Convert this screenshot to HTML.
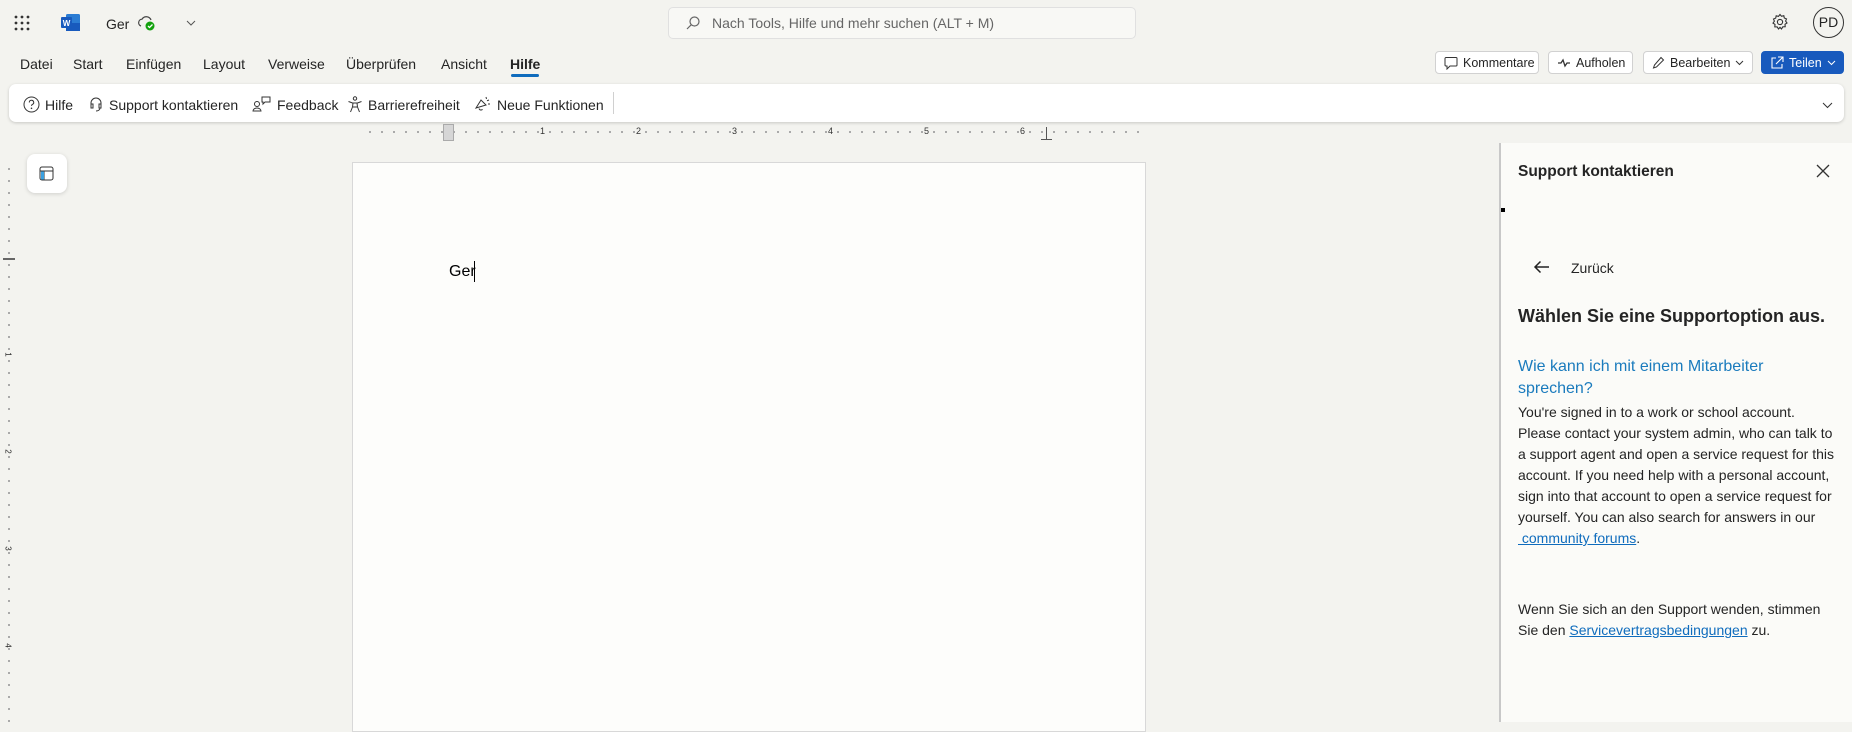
<!DOCTYPE html>
<html><head><meta charset="utf-8"><style>
*{box-sizing:border-box;margin:0;padding:0}
body{width:1852px;height:722px;overflow:hidden;background:#f3f3ef;font-family:"Liberation Sans",sans-serif;color:#242424;position:relative}
.a{position:absolute;white-space:nowrap}
.t{font-size:14px;top:56px}
.btn{position:absolute;top:51px;height:23px;border:1px solid #d1d1d1;border-radius:4px;background:#fff;font-size:12.5px;display:flex;align-items:center;padding-left:8px;gap:5px}
.ri{font-size:14px;top:96px;display:flex;align-items:center;gap:5px}
svg{display:block}
.p{font-size:14px;line-height:21px}
a{color:#0f6cbd;text-decoration:underline}
.rn{font-size:9px;color:#333;top:126px}
</style></head><body>
<svg class="a" style="left:14px;top:15px" width="16" height="16" viewBox="0 0 16 16" fill="#333"><circle cx="2" cy="2" r="1.4"/><circle cx="8" cy="2" r="1.4"/><circle cx="14" cy="2" r="1.4"/><circle cx="2" cy="8" r="1.4"/><circle cx="8" cy="8" r="1.4"/><circle cx="14" cy="8" r="1.4"/><circle cx="2" cy="14" r="1.4"/><circle cx="8" cy="14" r="1.4"/><circle cx="14" cy="14" r="1.4"/></svg>
<svg class="a" style="left:61px;top:13px" width="20" height="19" viewBox="0 0 20 19"><rect x="5" y="1" width="14" height="17" rx="1.5" fill="#2b7cd3"/><rect x="5" y="10" width="14" height="8" fill="#185abd"/><rect x="0" y="4" width="11" height="11" rx="1" fill="#185abd"/><text x="5.5" y="13" font-size="8" font-weight="bold" fill="#fff" text-anchor="middle" font-family="Liberation Sans">W</text></svg>
<div class="a" style="left:106px;top:16px;font-size:14px">Ger</div>
<svg class="a" style="left:137px;top:14px" width="20" height="18" viewBox="0 0 20 18"><path d="M4 12a3.5 3.5 0 0 1 1-6.8A5 5 0 0 1 14 6" fill="none" stroke="#444" stroke-width="1.2"/><circle cx="13" cy="12" r="4.5" fill="#13a10e"/><path d="M11 12l1.5 1.5 3-3" stroke="#fff" stroke-width="1.3" fill="none"/></svg>
<svg class="a" style="left:186px;top:20px" width="10" height="6" viewBox="0 0 10 6"><path d="M1 1l4 4 4-4" stroke="#555" fill="none"/></svg>
<div class="a" style="left:668px;top:7px;width:468px;height:32px;border:1px solid #e0e0e0;border-radius:5px;background:#f8f8f5"></div>
<svg class="a" style="left:686px;top:16px" width="14" height="14" viewBox="0 0 14 14"><circle cx="8.5" cy="5.5" r="4.5" fill="none" stroke="#666" stroke-width="1.2"/><path d="M5.3 8.7L1 13" stroke="#666" stroke-width="1.2"/></svg>
<div class="a" style="left:712px;top:15px;font-size:14px;color:#666">Nach Tools, Hilfe und mehr suchen (ALT + M)</div>
<svg class="a" style="left:1771px;top:13px" width="18" height="18" viewBox="0 0 18 18"><circle cx="9" cy="9" r="2.6" fill="none" stroke="#333" stroke-width="1.1"/><path d="M9 1.5l1.5 1.8 2.3-.6.5 2.3 2.2.9-.9 2.2 1.4 1.9-2 1.3.2 2.4-2.4.1L10.5 16 9 14.3 7.5 16l-1.3-2.1-2.4-.1.2-2.4-2-1.3 1.4-1.9-.9-2.2 2.2-.9.5-2.3 2.3.6z" fill="none" stroke="#333" stroke-width="1.1"/></svg>
<div class="a" style="left:1813px;top:7px;width:31px;height:31px;border:1.3px solid #333;border-radius:50%;font-size:14px;text-align:center;line-height:29px">PD</div>
<div class="a t" style="left:20px">Datei</div>
<div class="a t" style="left:73px">Start</div>
<div class="a t" style="left:126px">Einfügen</div>
<div class="a t" style="left:203px">Layout</div>
<div class="a t" style="left:268px">Verweise</div>
<div class="a t" style="left:346px">Überprüfen</div>
<div class="a t" style="left:441px">Ansicht</div>
<div class="a t" style="left:510px;font-weight:bold">Hilfe</div>
<div class="a" style="left:511px;top:74px;width:28px;height:3px;background:#0f6cbd;border-radius:2px"></div>
<div class="btn" style="left:1435px;width:104px"><svg width="14" height="14" viewBox="0 0 14 14"><path d="M2 1.5h10a1 1 0 0 1 1 1v6.5a1 1 0 0 1-1 1H6l-3 3v-3H2a1 1 0 0 1-1-1V2.5a1 1 0 0 1 1-1z" fill="none" stroke="#333"/></svg>Kommentare</div>
<div class="btn" style="left:1548px;width:85px"><svg width="14" height="10" viewBox="0 0 14 10"><path d="M1 5h3l2-3 2 6 2-3h3" fill="none" stroke="#333" stroke-width="1.3"/></svg>Aufholen</div>
<div class="btn" style="left:1643px;width:110px"><svg width="13" height="13" viewBox="0 0 13 13"><path d="M9 1.5l2.5 2.5-7 7L1.5 12l1-3z" fill="none" stroke="#333"/></svg>Bearbeiten <svg width="9" height="6" viewBox="0 0 9 6"><path d="M1 1l3.5 3.5L8 1" stroke="#333" fill="none"/></svg></div>
<div class="btn" style="left:1761px;width:83px;background:#185abd;border-color:#185abd;color:#fff"><svg width="14" height="13" viewBox="0 0 14 13"><path d="M6 2H2v10h10V8M8 1h5v5M13 1L6 8" fill="none" stroke="#fff" stroke-width="1.1"/></svg>Teilen <svg width="9" height="6" viewBox="0 0 9 6"><path d="M1 1l3.5 3.5L8 1" stroke="#fff" fill="none"/></svg></div>
<div class="a" style="left:9px;top:84px;width:1835px;height:38px;background:#fff;border-radius:7px;box-shadow:0 1px 3px rgba(0,0,0,.18)"></div>
<div class="a ri" style="left:23px"><svg width="17" height="17" viewBox="0 0 17 17"><circle cx="8.5" cy="8.5" r="7.5" fill="none" stroke="#333"/><path d="M6.3 6.5a2.2 2.2 0 1 1 3 2c-.6.3-.8.7-.8 1.4" fill="none" stroke="#333"/><circle cx="8.5" cy="12.3" r=".8" fill="#333"/></svg>Hilfe</div>
<div class="a ri" style="left:88px"><svg width="16" height="17" viewBox="0 0 16 17"><path d="M3 10V7a5 5 0 0 1 10 0v3M3 8h2v4H3zM11 8h2v4h-2zM12 12c0 2-2 3-4 3" fill="none" stroke="#333"/></svg>Support kontaktieren</div>
<div class="a ri" style="left:252px"><svg width="20" height="17" viewBox="0 0 20 17"><circle cx="5" cy="8" r="2.5" fill="none" stroke="#333"/><path d="M1 15a4 3 0 0 1 8 0zM10 1h8v5h-5l-2 2V6h-1z" fill="none" stroke="#333"/></svg>Feedback</div>
<div class="a ri" style="left:347px"><svg width="16" height="17" viewBox="0 0 16 17"><circle cx="8" cy="2.5" r="1.7" fill="none" stroke="#333"/><path d="M1.5 5.5l4 1.5h5l4-1.5M6 7l-.5 4-2 5M10 7l.5 4 2 5M6 11h4" fill="none" stroke="#333"/></svg>Barrierefreiheit</div>
<div class="a ri" style="left:474px"><svg width="18" height="17" viewBox="0 0 18 17"><path d="M2 12l5-8 5 5zM5 12.5a2 2 0 0 0 3.5.8M12 1l.5 2M15 4l-2 .8M14 8h2" fill="none" stroke="#333"/></svg>Neue Funktionen</div>
<div class="a" style="left:613px;top:92px;width:1px;height:22px;background:#d0d0d0"></div>
<svg class="a" style="left:1822px;top:102px" width="11" height="7" viewBox="0 0 11 7"><path d="M1 1l4.5 4.5L10 1" stroke="#333" fill="none"/></svg>
<svg class="a" style="left:364px;top:128px" width="784" height="8"><defs><pattern id="d" width="12" height="8" patternUnits="userSpaceOnUse"><rect x="5" y="3" width="2" height="2" fill="#aaa"/></pattern></defs><rect width="784" height="8" fill="url(#d)"/></svg>
<div class="a" style="left:443px;top:124px;width:11px;height:17px;background:#d6d6d6;border:1px solid #aaa"></div>
<div class="a" style="left:1046px;top:127px;width:1px;height:12px;background:#555"></div>
<div class="a" style="left:1041px;top:139px;width:11px;height:1px;background:#555"></div>
<div class="a rn" style="left:540px">1</div>
<div class="a rn" style="left:636px">2</div>
<div class="a rn" style="left:732px">3</div>
<div class="a rn" style="left:828px">4</div>
<div class="a rn" style="left:924px">5</div>
<div class="a rn" style="left:1020px">6</div>
<svg class="a" style="left:5px;top:163px" width="8" height="560"><defs><pattern id="v" width="8" height="12" patternUnits="userSpaceOnUse"><rect x="3" y="5" width="2" height="2" fill="#aaa"/></pattern></defs><rect width="8" height="560" fill="url(#v)"/></svg>
<div class="a" style="left:3px;top:258px;width:12px;height:2px;background:#666"></div>
<div class="a" style="left:6px;top:350px;font-size:8px;transform:rotate(90deg)">1</div>
<div class="a" style="left:6px;top:447px;font-size:8px;transform:rotate(90deg)">2</div>
<div class="a" style="left:6px;top:544px;font-size:8px;transform:rotate(90deg)">3</div>
<div class="a" style="left:6px;top:641px;font-size:8px;transform:rotate(90deg)">4</div>
<div class="a" style="left:27px;top:154px;width:40px;height:39px;background:#fff;border-radius:8px;box-shadow:0 1px 4px rgba(0,0,0,.15)"></div>
<svg class="a" style="left:39px;top:166px" width="15" height="15" viewBox="0 0 15 15"><rect x="1" y="1" width="13" height="13" rx="2" fill="none" stroke="#333"/><path d="M1 5h13M5 5v9" stroke="#333" fill="none"/><rect x="2" y="5.5" width="3" height="8" fill="#3aa0e0"/></svg>
<div class="a" style="left:352px;top:162px;width:794px;height:570px;background:#fdfdfb;border:1px solid #d8d8d8"></div>
<div class="a" style="left:449px;top:263px;font-size:16px;color:#000">Ger</div>
<div class="a" style="left:474px;top:261px;width:1px;height:21px;background:#000"></div>
<div class="a" style="left:1499px;top:143px;width:2px;height:579px;background:#c8c8c8"></div>
<div class="a" style="left:1501px;top:143px;width:351px;height:579px;background:#fbfbf8"></div>
<div class="a" style="left:1518px;top:163px;font-size:15.5px;font-weight:bold;color:#242424">Support kontaktieren</div>
<svg class="a" style="left:1816px;top:164px" width="14" height="14" viewBox="0 0 14 14"><path d="M1 1l12 12M13 1L1 13" stroke="#333" stroke-width="1.3"/></svg>
<div class="a" style="left:1501px;top:208px;width:4px;height:4px;background:#000"></div>
<svg class="a" style="left:1533px;top:260px" width="17" height="14" viewBox="0 0 17 14"><path d="M16 7H2M7.5 1.5L2 7l5.5 5.5" fill="none" stroke="#222" stroke-width="1.5"/></svg>
<div class="a" style="left:1571px;top:260px;font-size:14px">Zurück</div>
<div class="a" style="left:1518px;top:306px;font-size:18px;font-weight:bold">Wählen Sie eine Supportoption aus.</div>
<div class="a" style="left:1518px;top:356px;width:300px;font-size:16px;line-height:22px;color:#1a7bbd;white-space:normal">Wie kann ich mit einem Mitarbeiter sprechen?</div>
<div class="a p" style="left:1518px;top:402px;width:320px;white-space:normal">You're signed in to a work or school account. Please contact your system admin, who can talk to a support agent and open a service request for this account. If you need help with a personal account, sign into that account to open a service request for yourself. You can also search for answers in our <a>&nbsp;community forums</a>.</div>
<div class="a p" style="left:1518px;top:599px;width:320px;white-space:normal">Wenn Sie sich an den Support wenden, stimmen Sie den <a>Servicevertragsbedingungen</a> zu.</div>
</body></html>
